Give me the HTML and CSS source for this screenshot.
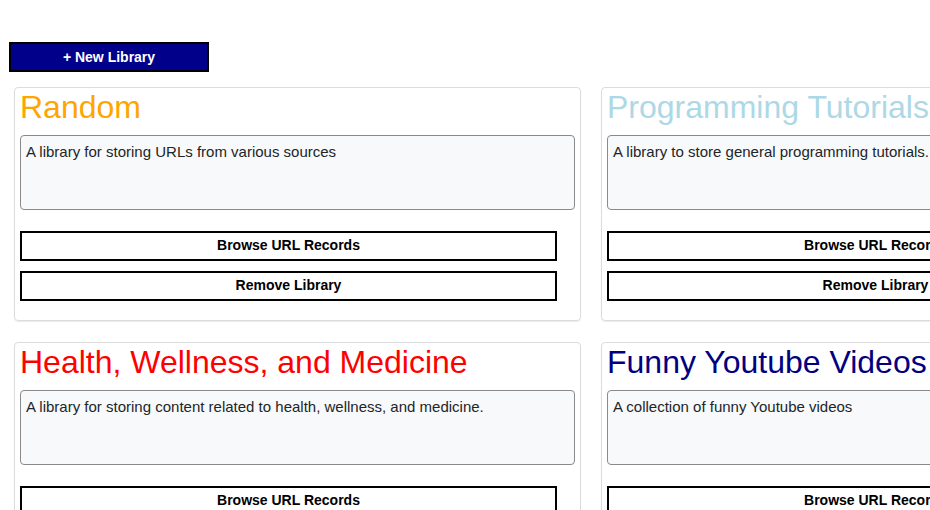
FILE: index.html
```html
<!DOCTYPE html>
<html>
<head>
<meta charset="utf-8">
<link rel="stylesheet" href="styles.css">
</head>
<body>
<div class="page">
  <button class="new-btn">+ New Library</button>
  <div class="grid">
    <div class="card">
      <h1 class="title orange">Random</h1>
      <div class="desc">A library for storing URLs from various sources</div>
      <div class="actions">
        <button class="btn">Browse URL Records</button>
        <button class="btn">Remove Library</button>
      </div>
    </div>
    <div class="card">
      <h1 class="title lightblue">Programming Tutorials</h1>
      <div class="desc">A library to store general programming tutorials.</div>
      <div class="actions">
        <button class="btn">Browse URL Records</button>
        <button class="btn">Remove Library</button>
      </div>
    </div>
    <div class="card">
      <h1 class="title red">Health, Wellness, and Medicine</h1>
      <div class="desc">A library for storing content related to health, wellness, and medicine.</div>
      <div class="actions">
        <button class="btn">Browse URL Records</button>
        <button class="btn">Remove Library</button>
      </div>
    </div>
    <div class="card">
      <h1 class="title navy">Funny Youtube Videos</h1>
      <div class="desc">A collection of funny Youtube videos</div>
      <div class="actions">
        <button class="btn">Browse URL Records</button>
        <button class="btn">Remove Library</button>
      </div>
    </div>
  </div>
</div>
</body>
</html>
```

FILE: styles.css
```css
html, body {
  margin: 0;
  padding: 0;
  overflow: hidden;
  background: #fff;
  font-family: "Liberation Sans", Arial, sans-serif;
}
.page {
  padding: 42px 0 0 9px;
}
.new-btn {
  display: block;
  width: 200px;
  height: 30px;
  background: #00008b;
  color: #fff;
  border: 2px solid #000;
  font-family: "Liberation Sans", Arial, sans-serif;
  font-weight: bold;
  font-size: 14px;
  padding: 0 0 1px 0;
  margin: 0;
}
.grid {
  display: grid;
  grid-template-columns: 567px 567px;
  column-gap: 20px;
  row-gap: 21px;
  margin: 15px 0 0 5px;
  width: 1154px;
}
.card {
  border: 1px solid #dcdcdc;
  border-radius: 4px;
  box-shadow: 0 1px 1px rgba(0, 0, 0, 0.08);
  padding: 0 5px 19px 5px;
}
.title {
  margin: 0;
  padding-top: 1px;
  font-size: 32px;
  font-weight: normal;
  line-height: 37px;
  white-space: nowrap;
}
.orange { color: #ffa500; }
.lightblue { color: #add8e6; }
.red { color: #ff0000; }
.navy { color: #000080; }
.desc {
  margin-top: 9px;
  height: 75px;
  border: 1px solid #8a8a8a;
  border-radius: 4px;
  background: #f8f9fa;
  color: #212529;
  font-size: 15px;
  line-height: 18px;
  padding: 7px 5px 0 5px;
  box-sizing: border-box;
}
.actions {
  margin-top: 21px;
  display: flex;
  flex-direction: column;
  gap: 10px;
}
.btn {
  width: 537px;
  height: 30px;
  background: #fff;
  border: 2px solid #000;
  color: #000;
  font-family: "Liberation Sans", Arial, sans-serif;
  font-weight: bold;
  font-size: 14px;
  padding: 0 0 2px 0;
  margin: 0;
}
```
